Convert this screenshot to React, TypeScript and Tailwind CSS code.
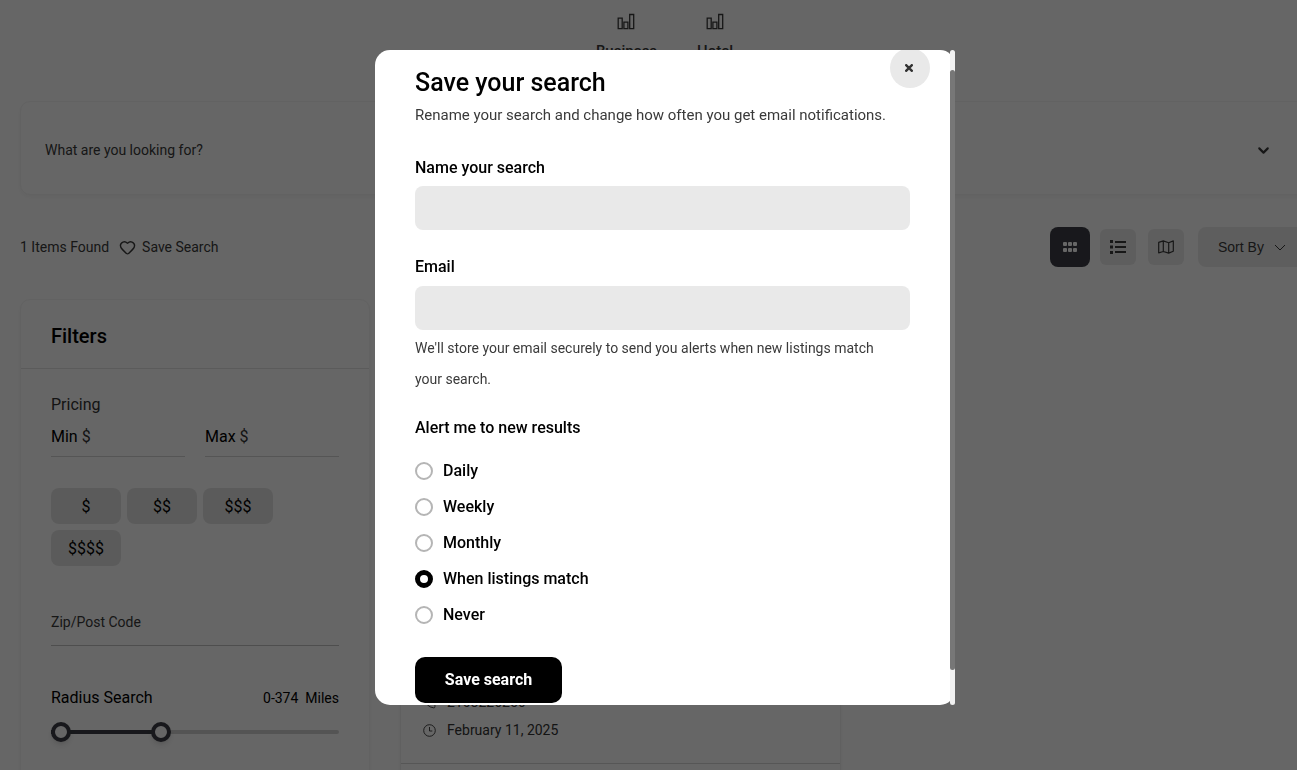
import { useState } from 'react';
import * as Slider from '@radix-ui/react-slider';
import { ChevronDown, Heart } from 'lucide-react';

const categories = ['Business', 'Hotel'];
const prices = ['$', '$$', '$$$', '$$$$'];
const alertOptions = ['Daily', 'Weekly', 'Monthly', 'When listings match', 'Never'];

function ChartIcon() {
  return (
    <svg width="18" height="18" viewBox="0 0 18 18" fill="none" stroke="currentColor" strokeWidth="1.3">
      <path d="M1.2 5.2h4v10.5h-4zM6.9 9.2h4v6.5h-4zM12.7 1.5h4v14.2h-4z" />
    </svg>
  );
}

function GridIcon() {
  return (
    <svg width="14" height="10" viewBox="0 0 14 10" fill="currentColor">
      <rect x="0" y="0" width="4" height="4" rx="1" />
      <rect x="5" y="0" width="4" height="4" rx="1" />
      <rect x="10" y="0" width="4" height="4" rx="1" />
      <rect x="0" y="6" width="4" height="4" rx="1" />
      <rect x="5" y="6" width="4" height="4" rx="1" />
      <rect x="10" y="6" width="4" height="4" rx="1" />
    </svg>
  );
}

function ListIcon() {
  return (
    <svg width="16" height="14" viewBox="0 0 16 14" fill="currentColor">
      <path d="M0 0h3v3H0zM0 5.5h3v3H0zM0 11h3v3H0zM5 1h11v2H5zM5 6h11v2H5zM5 11h11v2H5z" />
    </svg>
  );
}

function MapIcon() {
  return (
    <svg width="16" height="14" viewBox="0 0 16 14" fill="none" stroke="currentColor" strokeWidth="1.2" strokeLinejoin="round">
      <path d="M.7 2.4 5.3.9l5.4 1.8L15.3.9v10.4l-4.6 1.8-5.4-1.6L.7 12.9zM5.3.9v10.6M10.7 2.7v10.4" />
    </svg>
  );
}

function Filters() {
  const [radius, setRadius] = useState([0, 374]);

  return (
    <aside className="w-[350px] shrink-0 rounded-[10px] border border-[#f4f4f4] shadow-[0_2px_4px_rgba(0,0,0,0.04)]">
      <h2 className="border-b border-[#e4e4e4] px-[30px] pt-[22px] pb-[18px] text-xl leading-7 font-medium text-black">Filters</h2>
      <div className="px-[30px] pt-6">
        <div className="text-base leading-6 text-[#333]">Pricing</div>
        <div className="mt-2.5 flex gap-5">
          {['Min', 'Max'].map((name) => (
            <label key={name} className="flex h-[30px] min-w-0 flex-1 items-start border-b border-[#d4d4d4] text-base leading-5 text-black">
              <span>{name}</span>
              <input type="text" placeholder="$" className="ml-1 w-full min-w-0 text-base leading-5 outline-none placeholder:text-[#333]" />
            </label>
          ))}
        </div>
        <div className="mt-[31px] flex flex-wrap gap-1.5">
          {prices.map((price) => (
            <button key={price} type="button" className="h-9 w-[70px] rounded-lg bg-[#e4e4e4] pt-0.5 text-base text-black">
              {price}
            </button>
          ))}
        </div>
        <input
          type="text"
          aria-label="Zip/Post Code"
          placeholder="Zip/Post Code"
          className="mt-8 h-12 w-full border-b border-[#c4c4c4] text-sm outline-none placeholder:text-[#3a3a3a]"
        />
        <div className="mt-10 flex items-center justify-between text-black">
          <span className="text-base leading-6">Radius Search</span>
          <span className="text-sm leading-5">
            {radius[0]}-{radius[1]}&nbsp; Miles
          </span>
        </div>
        <Slider.Root value={radius} onValueChange={setRadius} max={1000} className="relative mt-3 mb-10 flex h-5 items-center">
          <Slider.Track className="relative h-1 grow rounded-full bg-[#d2d2d2]">
            <Slider.Range className="absolute h-full bg-[#3c3e46]" />
          </Slider.Track>
          <Slider.Thumb aria-label="Minimum radius" className="block size-5 rounded-full border-4 border-[#3c3e46] bg-white shadow-md outline-none" />
          <Slider.Thumb aria-label="Maximum radius" className="block size-5 rounded-full border-4 border-[#3c3e46] bg-white shadow-md outline-none" />
        </Slider.Root>
      </div>
    </aside>
  );
}

function ListingCard() {
  return (
    <article className="w-[441px] rounded-[10px] border border-[#efefef] shadow-[0_2px_4px_rgba(0,0,0,0.04)]">
      <div className="h-[392px]" />
      <div className="space-y-2 border-b border-[#d8d8d8] px-[22px] pb-[23px] text-sm leading-5 text-[#333]">
        <div className="flex items-center gap-[11px]">
          <svg width="13" height="13" viewBox="0 0 24 24" fill="none" stroke="currentColor" strokeWidth="1.7">
            <path d="M22 16.9v3a2 2 0 0 1-2.2 2A19.8 19.8 0 0 1 2.1 4.2 2 2 0 0 1 4.1 2h3a2 2 0 0 1 2 1.7l1 3.7-1.7 2.5a16 16 0 0 0 6 6l2.5-1.7 3.7 1a2 2 0 0 1 1.4 1.7z" />
          </svg>
          <span>2108226256</span>
        </div>
        <div className="flex items-center gap-[11px]">
          <svg width="13" height="13" viewBox="0 0 13 13" fill="none" stroke="currentColor" strokeWidth="0.9">
            <circle cx="6.5" cy="6.5" r="5.8" />
            <path d="M6.5 3v4h2.8" />
          </svg>
          <span>February 11, 2025</span>
        </div>
      </div>
      <div className="h-16" />
    </article>
  );
}

function SaveSearchModal() {
  const [frequency, setFrequency] = useState('When listings match');

  return (
    <div className="fixed inset-y-0 left-0 -right-[33px] z-50 flex items-start justify-center bg-black/60 pt-[50px]">
      <div className="relative w-[580px]">
        <div role="dialog" aria-labelledby="save-title" className="relative overflow-hidden rounded-[15px] bg-white">
          <button
            type="button"
            aria-label="Close"
            className="absolute -top-0.5 right-[25px] flex size-10 items-center justify-center rounded-full bg-[#e9e9e9] text-[#333]"
          >
            <svg width="8" height="8" viewBox="0 0 8 8" stroke="currentColor" strokeWidth="2.4" className="mr-0.5">
              <path d="M.4.4l7.2 7.2M7.6.4.4 7.6" />
            </svg>
          </button>
          <form className="pt-[17px] pr-[45px] pb-0.5 pl-10 text-black" onSubmit={(e) => e.preventDefault()}>
            <h2 id="save-title" className="text-[25px] leading-8 font-medium">Save your search</h2>
            <p className="mt-1 text-[15px] leading-6 text-[#3a3a3a]">Rename your search and change how often you get email notifications.</p>

            <label htmlFor="search-name" className="mt-[29px] block text-base leading-6 font-medium">Name your search</label>
            <input id="search-name" type="text" className="mt-1.5 block h-11 w-full rounded-lg bg-[#e9e9e9] px-4 outline-none" />

            <label htmlFor="email" className="mt-[25px] block text-base leading-6 font-medium">Email</label>
            <input id="email" type="email" className="mt-[7px] block h-11 w-full rounded-lg bg-[#e9e9e9] px-4 outline-none" />
            <p className="mt-[3px] pr-6 text-sm leading-[31px] text-[#3a3a3a]">
              We'll store your email securely to send you alerts when new listings match your search.
            </p>

            <fieldset className="mt-[21px]">
              <legend className="text-base leading-6 font-medium">Alert me to new results</legend>
              <div className="mt-[13px]">
                {alertOptions.map((option) => (
                  <label key={option} className="flex h-9 items-center gap-2.5 text-base font-medium">
                    <input
                      type="radio"
                      name="frequency"
                      checked={frequency === option}
                      onChange={() => setFrequency(option)}
                      className="size-[18px] appearance-none rounded-full border-2 border-[#b5b5b5] checked:border-[5px] checked:border-black"
                    />
                    {option}
                  </label>
                ))}
              </div>
            </fieldset>

            <button type="submit" className="mt-6 h-[46px] w-[147px] rounded-[10px] bg-black text-base font-bold text-white">
              Save search
            </button>
          </form>
        </div>
        {/* Scrollbar sits over the rounded corners */}
        <div className="absolute inset-y-0 right-0 w-[5px] rounded-[3px] bg-[#f1f1f1] pt-5 pb-[35px]">
          <div className="h-full rounded-[3px] bg-[#777]" />
        </div>
      </div>
    </div>
  );
}

export default function App() {
  return (
    <div className="h-screen overflow-hidden bg-white font-['Roboto','Liberation_Sans',sans-serif] text-[#3a3a3a]">
      <div className="w-[calc(100%+32px)] px-5">
        <nav className="flex justify-center gap-10 pt-[13px]">
          {categories.map((name) => (
            <a key={name} href="#" className="flex flex-col items-center text-[15px] leading-5 font-medium">
              <ChartIcon />
              <span className="mt-2.5">{name}</span>
            </a>
          ))}
        </nav>

        <div className="mt-10 flex h-[94px] items-center justify-between rounded-[10px] border border-[#f4f4f4] pt-1 pr-9 pl-6 shadow-[0_2px_4px_rgba(0,0,0,0.04)]">
          <input type="text" aria-label="What are you looking for?" placeholder="What are you looking for?" className="flex-1 text-sm outline-none placeholder:text-[#3a3a3a]" />
          <ChevronDown size={17} strokeWidth={3} />
        </div>

        <div className="mt-8 flex h-10 items-center text-sm">
          <span>1 Items Found</span>
          <button type="button" className="ml-2.5 flex items-center gap-1.5">
            <Heart size={17} strokeWidth={2} />
            Save Search
          </button>
          <button type="button" aria-label="Grid view" className="ml-auto flex size-10 items-center justify-center rounded-lg bg-[#3c3e46] text-white">
            <GridIcon />
          </button>
          <button type="button" aria-label="List view" className="ml-2.5 flex size-9 items-center justify-center rounded-md bg-[#ececec]">
            <ListIcon />
          </button>
          <button type="button" aria-label="Map view" className="ml-3 flex size-9 items-center justify-center rounded-md bg-[#ececec]">
            <MapIcon />
          </button>
          <button type="button" className="ml-3.5 flex h-10 w-[111px] items-center gap-2.5 rounded-lg bg-[#ececec] pl-5 font-['Liberation_Sans',sans-serif]">
            Sort By
            <svg width="12" height="7" viewBox="0 0 12 7" fill="none" stroke="currentColor">
              <path d="M1 1l5 5 5-5" />
            </svg>
          </button>
        </div>

        <div className="mt-8 flex items-start gap-[30px]">
          <Filters />
          <ListingCard />
        </div>
      </div>

      <SaveSearchModal />
    </div>
  );
}
